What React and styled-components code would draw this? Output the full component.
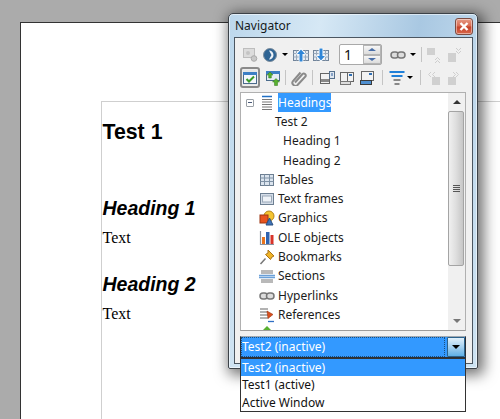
import React from "react";
import styled, { createGlobalStyle } from "styled-components";

const Global = createGlobalStyle`
  html, body { margin: 0; padding: 0; width: 500px; height: 419px; overflow: hidden; background: #ababab; }
  #root { width: 500px; height: 419px; overflow: hidden; }
`;

const Desktop = styled.div`
  position: relative;
  width: 500px;
  height: 419px;
  overflow: hidden;
  background: #ababab;
  padding: 22px 0 0 20px;
  box-sizing: border-box;
`;
const Page = styled.div`
  width: 480px;
  height: 397px;
  box-sizing: border-box;
  background: #fff;
  border-top: 1px solid #333;
  border-left: 1px solid #333;
  padding: 78px 0 0 80px;
`;
const Margin = styled.div`
  height: 100%;
  box-sizing: border-box;
  border-top: 1px solid #cfcfcf;
  border-left: 1px solid #cfcfcf;
  padding-left: 0.5px;
  color: #000;
`;
const Title = styled.h1`
  margin: 17px 0 0;
  font: bold 21.3px/26px "Liberation Sans", Arial, sans-serif;
`;
const Heading = styled.h2`
  margin: ${(p) => p.$top}px 0 0;
  font: italic bold 19.5px/24px "Liberation Sans", Arial, sans-serif;
`;
const BodyText = styled.p`
  margin: 8px 0 0;
  font: 16px/19px "Liberation Serif", "Times New Roman", serif;
`;

const Win = styled.section`
  position: absolute;
  left: 228px;
  top: 13px;
  width: 250px;
  height: 356px;
  box-sizing: border-box;
  border: 1px solid #3c4248;
  border-radius: 5px 5px 2px 2px;
  background: linear-gradient(100deg, #bcd7ec 0%, #d6e8f5 30%, #a9c8e2 62%, #cfe4f3 100%);
  box-shadow: 0 0 0 1px rgba(255,255,255,.55) inset, 3px 3px 14px 3px rgba(0,0,0,.55);
  padding: 0 4px 4px 5px;
  display: flex;
  flex-direction: column;
  font: 12px/16px "Noto Sans", "Open Sans", sans-serif;
  color: #111;
`;
const TitleBar = styled.header`
  height: 23px;
  flex: none;
  display: flex;
  align-items: flex-start;
  justify-content: space-between;
`;
const WinTitle = styled.span`
  font: 12px/16px "Noto Sans", sans-serif;
  margin: 4px 0 0 1px;
  color: #151a20;
`;
const CloseBtn = styled.button`
  width: 18px;
  height: 17px;
  margin: 4px 0 0;
  padding: 0;
  border: 1px solid #7c4c42;
  border-radius: 3px;
  background: linear-gradient(#e59a86 0%, #d9694f 48%, #c4412a 52%, #d9674a 100%);
  box-shadow: 0 0 0 1px rgba(255,255,255,.45) inset;
  display: flex;
  align-items: center;
  justify-content: center;
`;
const Panel = styled.div`
  flex: 1;
  min-height: 0;
  box-sizing: border-box;
  background: #f0f0f0;
  border: 1px solid #4b5661;
  padding: 5px 6px 0 5px;
  display: flex;
  flex-direction: column;
`;
const ToolRow = styled.div`
  display: flex;
  align-items: center;
  height: 23px;
  flex: none;
`;
const Slot = styled.span`
  flex: none;
  width: ${(p) => p.$w}px;
  margin-left: ${(p) => p.$ml || 0}px;
  height: 21px;
  box-sizing: border-box;
  display: flex;
  align-items: center;
  justify-content: center;
  ${(p) => p.$on && `
    border: 2px solid #8a8a8a;
    border-radius: 3px;
    background: #e6e6e6;
    box-shadow: 0 0 0 1px #ededed inset;
  `}
`;
const Sep = styled.span`
  flex: none;
  width: 1px;
  height: 15px;
  background: #c4c4c4;
  margin: 0 ${(p) => p.$r}px 0 ${(p) => p.$l}px;
`;
const Caret = styled.span`
  flex: none;
  width: 0;
  height: 0;
  margin: ${(p) => p.$m};
  border-left: 3px solid transparent;
  border-right: 3px solid transparent;
  border-top: 3px solid #000;
`;
const Spin = styled.span`
  flex: none;
  width: 43px;
  height: 21px;
  box-sizing: border-box;
  margin: 0 8px;
  background: #fff;
  border: 1px solid #a9a9a9;
  border-radius: 2px;
  display: flex;
  justify-content: space-between;
  padding-left: 4px;
  font: 14px/19px "Noto Sans", sans-serif;
`;
const SpinBtns = styled.span`
  width: 18px;
  display: flex;
  flex-direction: column;
`;
const SpinBtn = styled.span`
  flex: 1;
  border: 1px solid #b5b5b5;
  background: linear-gradient(#f6f6f6, #dcdcdc);
  display: flex;
  align-items: center;
  justify-content: center;
  &::after {
    content: "";
    border-left: 4px solid transparent;
    border-right: 4px solid transparent;
    ${(p) => (p.$down ? "border-top: 3px solid #4a6fa8;" : "border-bottom: 3px solid #4a6fa8;")}
  }
`;
const Tree = styled.div`
  position: relative;
  flex: none;
  height: 239px;
  margin-top: 3px;
  box-sizing: border-box;
  border: 1px solid #b0b0b0;
  border-bottom-color: #9c9c9c;
  background: #fff;
  overflow: hidden;
  display: flex;
`;
const Rows = styled.ul`
  list-style: none;
  flex: 1;
  margin: 0;
  padding: 0;
  overflow: hidden;
`;
const Row = styled.li`
  height: 19.3px;
  display: flex;
  align-items: center;
  padding-left: ${(p) => p.$indent}px;
  white-space: nowrap;
  font: 12px/16px "Noto Sans", sans-serif;
  color: #1c1c1c;
`;
const Tg = styled.span`
  flex: none;
  width: 8px;
  height: 8px;
  box-sizing: border-box;
  border: 1px solid #9aa0a6;
  border-radius: 1px;
  margin: 0 5px 0 0;
  display: flex;
  align-items: center;
  justify-content: center;
  &::after { content: ""; width: 4px; height: 1px; background: #4a5a78; }
`;
const RowIcon = styled.span`
  flex: none;
  width: 16px;
  height: 16px;
  margin-right: 3px;
  display: flex;
`;
const Sel = styled.span`
  background: #3399ff;
  color: #fff;
  line-height: 19px;
  display: block;
`;
const Scroll = styled.div`
  width: 17px;
  flex: none;
  background: #f0f0f0;
  display: flex;
  flex-direction: column;
  align-items: stretch;
`;
const ScrollEnd = styled.div`
  height: 18px;
  flex: none;
  display: flex;
  align-items: center;
  justify-content: center;
  &::after {
    content: "";
    border-left: 4px solid transparent;
    border-right: 4px solid transparent;
    ${(p) => (p.$down ? "border-top: 4px solid #777;" : "border-bottom: 4px solid #333;")}
  }
`;
const Thumb = styled.div`
  height: 155px;
  flex: none;
  box-sizing: border-box;
  margin-right: 1px;
  border: 1px solid #a4a4a4;
  border-radius: 2px;
  background: linear-gradient(90deg, #f0f0f0, #dedede 50%, #c6c6c6);
  display: flex;
  flex-direction: column;
  align-items: center;
  justify-content: center;
  gap: 1px;
`;
const Grip = styled.i`
  width: 7px;
  height: 1px;
  background: #555;
`;
const ScrollRest = styled.div`
  flex: 1;
`;
const ComboWrap = styled.div`
  position: relative;
  margin-top: 5px;
  flex: none;
`;
const Combo = styled.div`
  height: 22px;
  box-sizing: border-box;
  display: flex;
  align-items: stretch;
  background: #3399ff;
  border: 1px solid #2a2f36;
  border-top-color: #a0a8b0;
`;
const ComboText = styled.span`
  flex: 1;
  color: #fff;
  font: 12px/19px "Noto Sans", sans-serif;
  padding-left: 1px;
  outline: 1px dotted #1b4f80;
  outline-offset: -1px;
`;
const ComboBtn = styled.span`
  width: 16px;
  margin-left: 2px;
  background: linear-gradient(#e2f0fa, #9fcdee 55%, #5fb0e6);
  border: 1px solid #2c628b;
  border-radius: 1px;
  display: flex;
  align-items: center;
  justify-content: center;
  &::after {
    content: "";
    border-left: 4px solid transparent;
    border-right: 4px solid transparent;
    border-top: 4px solid #000;
  }
`;
const List = styled.ul`
  position: absolute;
  left: 0;
  right: 0;
  top: 22px;
  margin: 0;
  padding: 0;
  list-style: none;
  z-index: 2;
  background: #fff;
  box-sizing: border-box;
  border: 1px solid #333;
  height: 54px;
`;
const Option = styled.li`
  height: 17.4px;
  padding-left: 1px;
  font: 12px/17px "Noto Sans", sans-serif;
  color: ${(p) => (p.$sel ? "#fff" : "#111")};
  background: ${(p) => (p.$sel ? "#3399ff" : "transparent")};
`;

const I = ({ children, s = 16 }) => (
  <svg width={s} height={s} viewBox="0 0 16 16" fill="none">{children}</svg>
);

const GridBg = () => (
  <>
    <rect x="0.5" y="3.5" width="15" height="10" fill="#e4eaf1" stroke="#71849a" />
    <path d="M0.5 6.5h15M0.5 10h15M3.5 3.5v10M12.5 3.5v10" stroke="#9aaabc" />
  </>
);
const iconset = {
  content: (
    <I>
      <rect x="1.5" y="1.5" width="11" height="9" fill="#dcdcdc" stroke="#bdbdbd" />
      <circle cx="6" cy="6" r="2" fill="#c4c4c4" />
      <circle cx="12" cy="11.5" r="2.8" fill="#c8c8c8" stroke="#aaa" />
    </I>
  ),
  nav: (
    <I>
      <circle cx="8" cy="8" r="6.5" fill="#2f6494" stroke="#7c8e9e" />
      <path d="M7 3.500 A4.500 4.500 0 0 1 7 12.500 L9.500 8z" fill="#eef3f8" />
    </I>
  ),
  prev: (
    <I>
      <GridBg />
      <path d="M8 1l5.500 6.500H10.300V15H5.700V7.500H2.500z" fill="#fff" />
      <path d="M8 2.500l4 4.500H9.500v7.500h-3V7H4z" fill="#2f86d8" />
    </I>
  ),
  next: (
    <I>
      <GridBg />
      <path d="M8 15L2.500 8.500H5.700V1h4.600v7.500h3.200z" fill="#fff" />
      <path d="M8 13.500L4 9h2.500V1.500h3V9H12z" fill="#2f86d8" />
    </I>
  ),
  link: (
    <I>
      <rect x="1" y="5" width="7.5" height="6" rx="3" stroke="#777" strokeWidth="1.5" fill="#ddd" />
      <rect x="7.5" y="5" width="7.5" height="6" rx="3" stroke="#777" strokeWidth="1.5" fill="#ddd" />
    </I>
  ),
  promote: (
    <I>
      <rect x="1" y="1" width="8" height="7" fill="#d0d0d0" />
      <path d="M9 13l2.5-2.5L14 13M9 16l2.5-2.5L14 16" stroke="#cdcdcd" />
    </I>
  ),
  demote: (
    <I>
      <rect x="2" y="6" width="8" height="9" fill="#d0d0d0" />
      <path d="M10 1l2.5 2.5L15 1M10 4l2.5 2.5L15 4" stroke="#cdcdcd" />
    </I>
  ),
  toggle: (
    <I>
      <rect x="1.5" y="2.5" width="13" height="11" fill="#f4f7fb" stroke="#4a6b8c" />
      <rect x="1" y="2" width="14" height="3" fill="#3d7fc4" />
      <path d="M4.5 9l2.5 2.5L12 6.5" stroke="#3a9a2a" strokeWidth="2" />
    </I>
  ),
  toggle2: (
    <I>
      <rect x="1.5" y="1.5" width="13" height="9" fill="#e6edf5" stroke="#4a6b8c" />
      <rect x="1" y="1" width="14" height="3" fill="#3d7fc4" />
      <path d="M5 2l3 3H6.3v3H3.7V5H2zM11 8.500l3.500 3.500h-2v3.500h-3V12h-2z" fill="#58b030" stroke="#2f7a18" strokeWidth=".5" />
    </I>
  ),
  clip: (
    <I>
      <path d="M4 12.500L11.500 4a2 2 0 0 1 3 2.500L7 14.500a3 3 0 0 1-5-3.500L9.500 2.500" stroke="#8a8a8a" strokeWidth="2" />
    </I>
  ),
  head1: (
    <I>
      <rect x="1.5" y="3.5" width="9" height="10" fill="#f2f2f2" stroke="#666" />
      <rect x="2" y="9" width="8" height="3" fill="#888" />
      <rect x="10.5" y="1.5" width="5" height="7" fill="#dfe7f0" stroke="#56708c" />
      <path d="M13 3v3" stroke="#2f5f9e" />
    </I>
  ),
  head2: (
    <I>
      <rect x="1.5" y="2.5" width="13" height="9" fill="#f2f2f2" stroke="#666" />
      <path d="M8.5 2.500v9" stroke="#666" />
      <rect x="10" y="4" width="3" height="2" fill="#2f6fb4" />
      <rect x="1.5" y="11.5" width="10" height="3" fill="#ddd" stroke="#777" />
    </I>
  ),
  head3: (
    <I>
      <rect x="2.5" y="1.5" width="12" height="9" fill="#f2f2f2" stroke="#666" />
      <rect x="10" y="3" width="3" height="2" fill="#2f6fb4" />
      <rect x="1.5" y="10.5" width="11" height="4" fill="#4f8fd0" stroke="#3a3a3a" />
    </I>
  ),
  levels: (
    <I>
      <path d="M0.5 2h15" stroke="#1f7fd8" strokeWidth="2" />
      <path d="M2.5 6h11" stroke="#1f7fd8" strokeWidth="2" />
      <path d="M4.5 10h7" stroke="#888" strokeWidth="2" />
      <path d="M5.5 14h5" stroke="#888" strokeWidth="2" />
    </I>
  ),
  left: (
    <I>
      <path d="M5 2L2.5 4.500 5 7M9 2L6.5 4.500 9 7" stroke="#cfcfcf" />
      <rect x="6" y="7" width="8" height="8" fill="#d0d0d0" />
    </I>
  ),
  right: (
    <I>
      <path d="M10 2l2.500 2.500L10 7M7 2l2.500 2.500L7 7" stroke="#cfcfcf" />
      <rect x="2" y="7" width="8" height="8" fill="#d0d0d0" />
    </I>
  ),
  headings: (
    <I>
      <path d="M3 1.500h10" stroke="#1f6fc4" strokeWidth="1.5" />
      <path d="M3 4.500h10M3 7h10M3 9.500h10M3 12h10M3 14.500h10" stroke="#777" />
    </I>
  ),
  tables: (
    <I>
      <rect x="1.5" y="2.5" width="13" height="11" fill="#dbe4ee" stroke="#6d7f92" />
      <path d="M1.500 6h13M1.500 9.500h13M5.500 2.500v11M10.500 2.500v11" stroke="#7f92a6" />
    </I>
  ),
  frames: (
    <I>
      <rect x="1.5" y="2.5" width="13" height="11" fill="#d4dde8" stroke="#6d7f92" />
      <rect x="3.5" y="5" width="9" height="6" fill="#eef2f7" stroke="#9aa8b8" />
    </I>
  ),
  graphics: (
    <I>
      <circle cx="10" cy="6" r="5" fill="#f4c430" stroke="#b5841a" />
      <rect x="1" y="5" width="8" height="8" fill="#e8541e" stroke="#9c3410" />
      <path d="M7 15l3.500-7 3.500 7z" fill="#3f74b8" stroke="#2a4f80" />
    </I>
  ),
  ole: (
    <I>
      <path d="M1.500 1v13.500H15" stroke="#8892a0" strokeWidth="1.2" />
      <rect x="3" y="7" width="3" height="7" fill="#e8741e" />
      <rect x="7" y="2" width="3.5" height="12" fill="#2f63b0" />
      <rect x="11.5" y="5" width="3" height="9" fill="#d8342a" />
    </I>
  ),
  bookmarks: (
    <I>
      <path d="M9 1l6 6-2 1-1.500 2.500-5-5L9 4z" fill="#f0b428" stroke="#a8741a" />
      <path d="M6.500 9.500L1.500 15" stroke="#777" strokeWidth="1.5" />
    </I>
  ),
  sections: (
    <I>
      <rect x="2" y="2" width="12" height="4" fill="#b9b9b9" />
      <path d="M0 7.500h16M0 9.500h16" stroke="#6aa0d8" strokeWidth="1.3" />
      <rect x="2" y="11" width="12" height="4" fill="#b9b9b9" />
    </I>
  ),
  refs: (
    <I>
      <path d="M1 2h8M1 5h8M1 8h8M1 11h8" stroke="#666" />
      <path d="M8 4l6 3.500-5 4z" fill="#d8501e" stroke="#9c3410" strokeWidth=".6" />
      <path d="M9 14.500h6" stroke="#2f6fc4" strokeWidth="1.3" />
    </I>
  ),
  index: (
    <I>
      <path d="M8 0l4 4H9.500v5h-3V4H4z" fill="#58b030" />
    </I>
  ),
};

const rows = [
  { label: "Tables", icon: "tables" },
  { label: "Text frames", icon: "frames" },
  { label: "Graphics", icon: "graphics" },
  { label: "OLE objects", icon: "ole" },
  { label: "Bookmarks", icon: "bookmarks" },
  { label: "Sections", icon: "sections" },
  { label: "Hyperlinks", icon: "link" },
  { label: "References", icon: "refs" },
  { label: "", icon: "index" },
];

export default function App() {
  return (
    <Desktop>
      <Global />
      <Page>
        <Margin>
          <Title>Test 1</Title>
          <Heading $top={51}>Heading 1</Heading>
          <BodyText>Text</BodyText>
          <Heading $top={25}>Heading 2</Heading>
          <BodyText>Text</BodyText>
        </Margin>
      </Page>
      <Win>
        <TitleBar>
          <WinTitle>Navigator</WinTitle>
          <CloseBtn aria-label="Close">
            <svg width="10" height="9" viewBox="0 0 10 9">
              <path d="M1.500 1l7 7M8.500 1l-7 7" stroke="#fff" strokeWidth="2.4" />
            </svg>
          </CloseBtn>
        </TitleBar>
        <Panel>
          <ToolRow>
            <Slot $w={20}>{iconset.content}</Slot>
            <Slot $w={20}>{iconset.nav}</Slot>
            <Caret $m="0 3px 0 2px" />
            <Slot $w={20}>{iconset.prev}</Slot>
            <Slot $w={20}>{iconset.next}</Slot>
            <Spin>
              1
              <SpinBtns>
                <SpinBtn />
                <SpinBtn $down />
              </SpinBtns>
            </Spin>
            <Slot $w={16}>{iconset.link}</Slot>
            <Caret $m="0 4px" />
            <Sep $l={1} $r={2} />
            <Slot $w={20}>{iconset.promote}</Slot>
            <Slot $w={20}>{iconset.demote}</Slot>
          </ToolRow>
          <ToolRow>
            <Slot $w={20} $on>{iconset.toggle}</Slot>
            <Slot $w={20} $ml={3}>{iconset.toggle2}</Slot>
            <Sep $l={2} $r={3} />
            <Slot $w={20}>{iconset.clip}</Slot>
            <Sep $l={3} $r={3} />
            <Slot $w={21}>{iconset.head1}</Slot>
            <Slot $w={20}>{iconset.head2}</Slot>
            <Slot $w={20}>{iconset.head3}</Slot>
            <Sep $l={5} $r={4} />
            <Slot $w={20}>{iconset.levels}</Slot>
            <Caret $m="0 7px 0 0" />
            <Sep $l={0} $r={3} />
            <Slot $w={20}>{iconset.left}</Slot>
            <Slot $w={20}>{iconset.right}</Slot>
          </ToolRow>
          <Tree>
            <Rows>
              <Row $indent={5}>
                <Tg />
                <RowIcon>{iconset.headings}</RowIcon>
                <Sel>Headings</Sel>
              </Row>
              <Row $indent={34}>Test 2</Row>
              <Row $indent={42}>Heading 1</Row>
              <Row $indent={42}>Heading 2</Row>
              {rows.map((r) => (
                <Row key={r.icon} $indent={18}>
                  <RowIcon>{iconset[r.icon]}</RowIcon>
                  {r.label}
                </Row>
              ))}
            </Rows>
            <Scroll>
              <ScrollEnd />
              <Thumb>
                <Grip />
                <Grip />
                <Grip />
                <Grip />
              </Thumb>
              <ScrollRest />
              <ScrollEnd $down />
            </Scroll>
          </Tree>
          <ComboWrap>
            <Combo>
              <ComboText>Test2 (inactive)</ComboText>
              <ComboBtn />
            </Combo>
            <List>
              <Option $sel>Test2 (inactive)</Option>
              <Option>Test1 (active)</Option>
              <Option>Active Window</Option>
            </List>
          </ComboWrap>
        </Panel>
      </Win>
    </Desktop>
  );
}
